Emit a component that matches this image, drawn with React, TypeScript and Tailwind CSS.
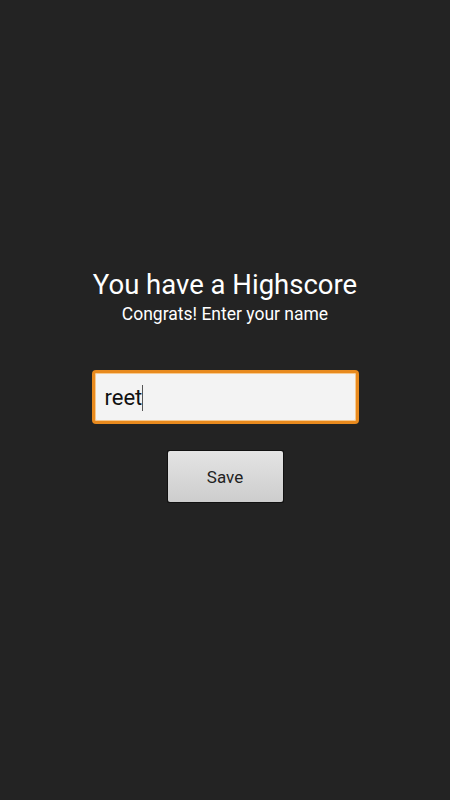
import React from "react";

export default function App() {
  return (
    <div
      className="w-[450px] h-[800px] bg-[#232323] flex flex-col items-center pt-[268px]"
      style={{ fontFamily: "Roboto, 'Noto Sans', sans-serif" }}
    >
      <div className="text-[27.5px] leading-[33px] text-white">You have a Highscore</div>
      <div className="text-[17.5px] leading-[21px] text-white mt-[3px]">Congrats! Enter your name</div>
      <div className="mt-[45px] w-[267px] h-[54px] rounded-[4px] bg-[#e88a1e] p-[3px]">
        <div className="w-full h-full rounded-[2px] bg-[#f3f3f3] flex items-center pl-[10px] shadow-[inset_0_0_0_1px_#f7c98f]">
          <span className="text-[22px] leading-[26px] text-[#111] mt-[2px]">reet</span>
          <span className="w-[1px] h-[26px] bg-[#555] mt-[2px]" />
        </div>
      </div>
      <div className="mt-[26px] w-[117px] h-[53px] rounded-[2px] bg-[#111] p-[1px]">
        <div className="w-full h-full rounded-[2px] bg-gradient-to-b from-[#e4e4e4] to-[#cdcdcd] flex items-center justify-center">
          <span className="text-[17px] leading-[20px] text-[#222] mt-[1px]">Save</span>
        </div>
      </div>
    </div>
  );
}
